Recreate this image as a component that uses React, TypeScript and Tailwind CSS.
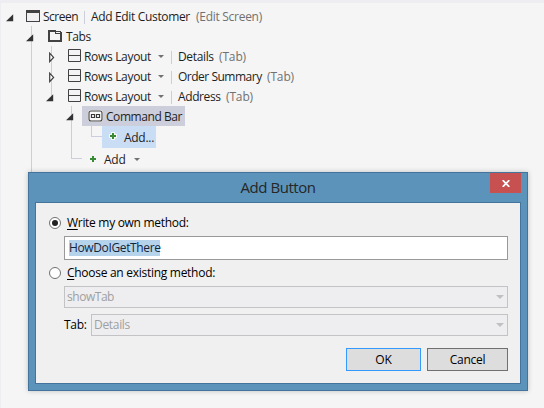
import type { ReactNode } from "react";

function Expander({ open }: { open?: boolean }) {
  return (
    <svg width="8" height="11" viewBox="0 0 8 11" className="shrink-0">
      {open ? (
        <path d="M7.2 2.2v7H0z" fill="#333335" />
      ) : (
        <path d="M0.7 1.2v8.4L4.6 5.4z" fill="#fff" stroke="#3c3c3e" strokeWidth="1.2" />
      )}
    </svg>
  );
}

function ScreenIcon() {
  return (
    <svg width="14" height="12" viewBox="0 0 14 12" className="shrink-0">
      <rect x="0.5" y="0.5" width="13" height="11" fill="#f0eff1" stroke="#424242" />
      <path d="M0 0h14v3H0z" fill="#424242" />
    </svg>
  );
}

function TabsIcon() {
  return (
    <svg width="14" height="12" viewBox="0 0 14 12" className="shrink-0" shapeRendering="crispEdges">
      <path d="M0 0h8v1h5v1h1v10H0zM2 2v8h10V4H7V2z" fill="#424242" fillRule="evenodd" />
      <path d="M8 2h4v1H8z" fill="#f5f5f5" />
    </svg>
  );
}

function RowsIcon() {
  return (
    <svg width="13" height="13" viewBox="0 0 13 13" className="shrink-0">
      <path d="M0.5 0.5h12v12H0.5zM1 6.5h11" fill="#f3f3f5" stroke="#424242" />
    </svg>
  );
}

function CommandIcon() {
  return (
    <svg width="15" height="12" viewBox="0 0 15 12" className="shrink-0">
      <rect x="0" y="0" width="15" height="12" rx="3" fill="#f6f6f6" />
      <rect x="1" y="1" width="13" height="10" rx="2" fill="none" stroke="#424242" strokeWidth="1.1" />
      <path d="M3.5 4.5h3v3h-3zM8.5 4.5h3v3h-3z" fill="#fff" stroke="#383838" strokeWidth="1.2" />
    </svg>
  );
}

function PlusIcon({ halo }: { halo?: boolean }) {
  return (
    <svg width="10" height="10" viewBox="0 0 10 10" className="shrink-0" shapeRendering="crispEdges">
      {halo && <path d="M3 1h4v2h2v4H7v2H3V7H1V3h2z" fill="#f4f8f4" />}
      <path d="M4 2h2v2h2v2H6v2H4V6H2V4h2z" fill="#388a34" />
    </svg>
  );
}

function Caret() {
  return (
    <svg width="6" height="3" viewBox="0 0 6 3" className="shrink-0">
      <path d="M0 0h6L3 3z" fill="#717171" />
    </svg>
  );
}

function Separator() {
  return <span className="h-[13px] w-px shrink-0 bg-[#cccedb]" />;
}

function LayoutRow({ name, nameClass, open }: { name: string; nameClass: string; open?: boolean }) {
  return (
    <div className={`flex h-5 items-center ${open ? "pl-[46px]" : "pl-[49px]"}`}>
      <Expander open={open} />
      <span className={open ? "w-[14px]" : "w-[11px]"} />
      <span className="-mt-[3px] flex"><RowsIcon /></span>
      <span className="ml-[3px] w-[67px] tracking-[-0.32px]">Rows Layout</span>
      <span className="ml-[7px] mr-[7px] -mt-px flex"><Caret /></span>
      <Separator />
      <span className={`ml-[6px] ${nameClass}`}>{name}</span>
      <span className="ml-[6px] tracking-[-0.14px] text-[#717171]">(Tab)</span>
    </div>
  );
}

function Tree() {
  return (
    <div className="relative pt-1">
      <span className="absolute left-[31px] top-[23px] h-[160px] w-px bg-[#cccedb]" />
      <span className="absolute left-[51px] top-[43px] h-[50px] w-px bg-[#cccedb]" />
      <span className="absolute left-[71px] top-[103px] h-[53px] w-[11px] border-b border-l border-[#cccedb]" />
      <span className="absolute left-[91px] top-[123px] h-[11px] w-[11px] border-b border-l border-[#cccedb]" />
      <div className="relative">
        <div className="flex h-5 items-center pl-[6px]">
          <Expander open />
          <span className="ml-[12px] -mt-[2px] flex"><ScreenIcon /></span>
          <span className="ml-[3px] w-[35px] tracking-[-0.51px]">Screen</span>
          <span className="ml-[6px] flex"><Separator /></span>
          <span className="ml-[6px] w-[99px] tracking-[-0.34px]">Add Edit Customer</span>
          <span className="ml-[6px] tracking-[-0.28px] text-[#717171]">(Edit Screen)</span>
        </div>
        <div className="flex h-5 items-center pl-[26px]">
          <Expander open />
          <span className="ml-[14px] -mt-[2px] flex"><TabsIcon /></span>
          <span className="ml-[4px] tracking-[-0.34px]">Tabs</span>
        </div>
        <LayoutRow name="Details" nameClass="w-[35px] tracking-[-0.35px]" />
        <LayoutRow name="Order Summary" nameClass="w-[83px] tracking-[-0.49px]" />
        <LayoutRow open name="Address" nameClass="w-[42px] tracking-[-0.4px]" />
        <div className="-mt-px flex h-5 items-center pl-[66px]">
          <Expander open />
          <span className="ml-[8px] flex h-5 w-[103px] items-center bg-[#cccedb] pl-[6px]">
            <span className="-mt-px flex"><CommandIcon /></span>
            <span className="ml-[3px] pt-px tracking-[-0.44px]">Command Bar</span>
          </span>
        </div>
        <div className="flex pl-[102px]">
          <span className="flex h-[22px] w-[54px] items-center bg-[#c9def5] pl-[6px]">
            <span className="-mt-[2px] flex"><PlusIcon halo /></span>
            <span className="ml-[6px] pt-px tracking-[-0.29px]">Add...</span>
          </span>
        </div>
        <div className="mt-px flex h-[22px] items-center pl-[88px]">
          <span className="-mt-[2px] flex"><PlusIcon /></span>
          <span className="ml-[6px] w-[22px] tracking-[-0.26px]">Add</span>
          <span className="ml-[8px] -mt-px flex"><Caret /></span>
        </div>
      </div>
    </div>
  );
}

function Radio({ checked }: { checked?: boolean }) {
  return (
    <svg width="12" height="12" viewBox="0 0 12 12" className="shrink-0">
      <circle cx="6" cy="6" r="5.5" fill="#fff" stroke="#707070" />
      {checked && <circle cx="6" cy="6" r="3" fill="#212121" />}
    </svg>
  );
}

function DisabledSelect({ children }: { children: ReactNode }) {
  return (
    <div className="flex h-[22px] flex-1 items-center justify-between border border-[#c3c3c5] bg-[#eeeef0] pl-[2px] pr-[3px] text-[#a0a0a0]">
      {children}
      <svg width="8" height="4" viewBox="0 0 8 4">
        <path d="M0 0h8L4 4z" fill="#c0c0c0" />
      </svg>
    </div>
  );
}

function AddButtonDialog() {
  return (
    <div className="absolute left-[28px] top-[172px] flex h-[219px] w-[500px] flex-col border border-[#44749b] bg-[#5b93bb] px-[6px] pb-[6px] text-black shadow-[0_0_5px_rgba(0,0,0,0.22)]">
      <div className="grid h-[29px] grid-cols-[31px_1fr_31px]">
        <span />
        <h1 className="text-center text-[15px] leading-[29px] tracking-[-0.45px] text-[#262626]">Add Button</h1>
        <button className="flex h-5 items-center justify-center bg-[#c75050]">
          <svg width="8" height="7" viewBox="0 0 8 7">
            <path d="M0.7 0.2l6.6 6.6M7.3 0.2L0.7 6.8" stroke="#fff" strokeWidth="1.8" />
          </svg>
        </button>
      </div>
      <div className="flex flex-1 flex-col border border-[#44749b] bg-[#f0f0f0] pl-[13px] pr-[12px] pt-[12px]">
        <label className="flex h-[16px] items-center">
          <Radio checked />
          <span className="ml-[6px] tracking-[-0.3px]"><u className="underline-offset-2">W</u>rite my own method:</span>
        </label>
        <div className="ml-[15px] mt-[5px] flex h-[24px] items-center border border-[#999] bg-white pl-[4px]">
          <span className="h-[16px] w-[91px] bg-[#b6d3ec] leading-[16px] tracking-[-0.37px] text-[#10263c]">HowDoIGetThere</span>
        </div>
        <label className="mt-[5px] flex h-[16px] items-center">
          <Radio />
          <span className="ml-[6px] tracking-[-0.28px]"><u className="underline-offset-2">C</u>hoose an existing method:</span>
        </label>
        <div className="ml-[15px] mt-[5px] flex">
          <DisabledSelect><span className="tracking-[-0.46px]">showTab</span></DisabledSelect>
        </div>
        <div className="ml-[15px] mt-[6px] flex items-center">
          <span className="w-[27px] tracking-[-0.32px]">Tab:</span>
          <DisabledSelect><span className="tracking-[-0.31px]">Details</span></DisabledSelect>
        </div>
        <div className="mt-[12px] flex justify-end gap-[6px]">
          <button className="h-[23px] w-[75px] border border-[#3399ff] bg-[#dddddd]">OK</button>
          <button className="h-[23px] w-[81px] border border-[#707070] bg-[#dddddd] tracking-[-0.27px]">Cancel</button>
        </div>
      </div>
    </div>
  );
}

export default function App() {
  return (
    <div className="relative h-[408px] w-[544px] overflow-hidden whitespace-nowrap border-l border-t-[3px] border-l-[#eeeef2] border-t-[#eeeef2] bg-[#f5f5f5] font-['Open_Sans','Noto_Sans',sans-serif] text-[12px] leading-[16px] text-[#1e1e1e]">
      <div className="-ml-px">
        <Tree />
      </div>
      <div className="absolute -left-px -top-[3px]">
        <AddButtonDialog />
      </div>
    </div>
  );
}
